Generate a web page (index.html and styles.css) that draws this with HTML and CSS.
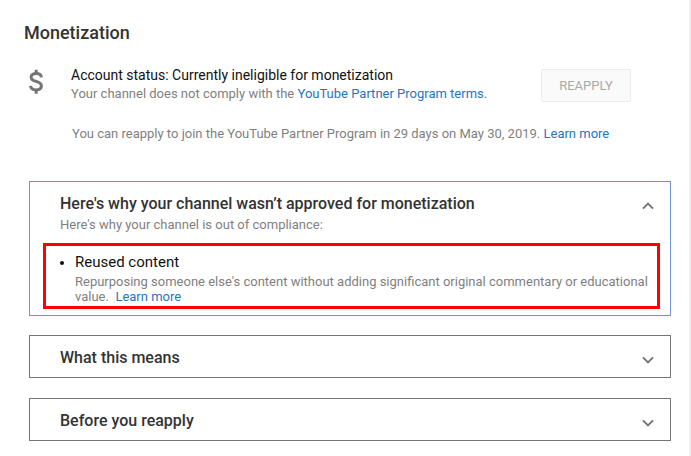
FILE: index.html
```html
<!DOCTYPE html>
<html lang="en">
<head>
<meta charset="utf-8">
<title>Monetization</title>
<link rel="stylesheet" href="styles.css">
</head>
<body>
<main class="panel">
  <h1 class="title">Monetization</h1>
  <section class="status">
    <svg class="dollar" viewBox="0 0 16 26" width="16" height="26" aria-hidden="true">
      <path d="M13.4 8.4C13.2 6 11.3 4.6 8.1 4.6 5.1 4.6 3.1 6 3.1 8.2c0 2.5 2.2 3.4 5.1 4.2 3.2.9 5.2 2 5.2 4.6 0 2.4-2.2 3.9-5.3 3.9-3.3 0-5.3-1.5-5.6-4" fill="none" stroke="#757575" stroke-width="3"/>
      <path d="M8.2 .8v4M8.2 20.8v4" fill="none" stroke="#757575" stroke-width="3"/>
    </svg>
    <div class="status-text">
      <div class="status-main">Account status: Currently ineligible for monetization</div>
      <div class="muted">Your channel does not comply with the <a class="link">YouTube Partner Program terms.</a></div>
    </div>
    <button class="reapply" type="button">REAPPLY</button>
  </section>
  <p class="muted notice">You can reapply to join the YouTube Partner Program in 29 days on May 30, 2019. <a class="link">Learn more</a></p>

  <section class="card card-open">
    <div class="card-head">
      <div>
        <h2 class="card-title">Here's why your channel wasn’t approved for monetization</h2>
        <div class="muted card-sub">Here's why your channel is out of compliance:</div>
      </div>
      <svg class="chev" viewBox="0 0 12 8" width="12" height="8" aria-hidden="true"><path d="M1 6.6l5-5 5 5" fill="none" stroke="#757575" stroke-width="2"/></svg>
    </div>
    <div class="highlight">
      <ul class="reasons">
        <li>
          <div class="reason-title">Reused content</div>
          <div class="muted reason-text">Repurposing someone else's content without adding significant original commentary or educational value.&nbsp; <a class="link">Learn more</a></div>
        </li>
      </ul>
    </div>
  </section>

  <section class="card card-closed first-closed">
    <h2 class="card-title">What this means</h2>
    <svg class="chev" viewBox="0 0 12 8" width="12" height="8" aria-hidden="true"><path d="M1 1.4l5 5 5-5" fill="none" stroke="#757575" stroke-width="2"/></svg>
  </section>
  <section class="card card-closed second-closed">
    <h2 class="card-title">Before you reapply</h2>
    <svg class="chev" viewBox="0 0 12 8" width="12" height="8" aria-hidden="true"><path d="M1 1.4l5 5 5-5" fill="none" stroke="#757575" stroke-width="2"/></svg>
  </section>
</main>
</body>
</html>
```
FILE: styles.css
```css
* { box-sizing: border-box; }
html, body { margin: 0; padding: 0; height: 100%; }
body {
  width: 691px;
  height: 456px;
  overflow: hidden;
  background: #f1f1f1;
  font-family: Roboto, "Liberation Sans", sans-serif;
}
.panel {
  width: 689px;
  height: 456px;
  background: #fff;
  padding: 22px 20px 0 24px;
}
.title {
  margin: 0;
  font-size: 18px;
  line-height: 22px;
  font-weight: 500;
  color: #333;
}
.status {
  display: flex;
  align-items: flex-start;
  margin-top: 22px;
}
.dollar { margin: 3px 0 0 4px; flex: none; }
.status-text { margin-left: 27px; flex: 1; }
.status-main { font-size: 14px; line-height: 18px; color: #111; }
.muted { font-size: 13px; line-height: 16px; color: #7f7f7f; }
.status-main + .muted { margin-top: 1px; line-height: 18px; }
.link { color: #1f74c4; }
.reapply {
  width: 90px;
  height: 33px;
  margin: 3px 38px 0 0;
  border: 1px solid #ececec;
  border-radius: 2px;
  background: #fafafa;
  color: #a9a9a9;
  font: 400 13px Roboto, sans-serif;
  padding: 0;
}
.notice { margin: 22px 0 0 48px; line-height: 18px; }
.card {
  width: 642px;
  margin-left: 5px;
  border: 1px solid #757575;
  background: #fff;
}
.card-open {
  height: 135px;
  margin-top: 38px;
  padding: 12px 10px 0 13px;
  border-color: #6f92d6;
}
.card-head {
  display: flex;
  justify-content: space-between;
  padding-left: 17px;
}
.card-title {
  margin: 0;
  font-size: 16px;
  line-height: 20px;
  font-weight: 500;
  color: #333;
}
.card-sub { margin-top: 3px; }
.card-head .chev { margin: 8px 6px 0 0; }
.highlight {
  width: 617px;
  height: 66px;
  margin-top: 10px;
  border: 3px solid #f00;
  background: #fff;
}
.reasons { margin: 0; padding: 0 0 0 29px; font-size: 14px; color: #111; }
.reason-title { font-size: 15px; line-height: 18px; margin-top: 7px; }
.reason-text { line-height: 15px; margin-top: 3px; padding-right: 3px; }
.card-closed {
  height: 43px;
  display: flex;
  align-items: center;
  justify-content: space-between;
  padding: 2px 16px 0 30px;
}
.first-closed { margin-top: 19px; }
.second-closed { margin-top: 20px; }
.card-closed .chev { margin-top: 4px; }
```
